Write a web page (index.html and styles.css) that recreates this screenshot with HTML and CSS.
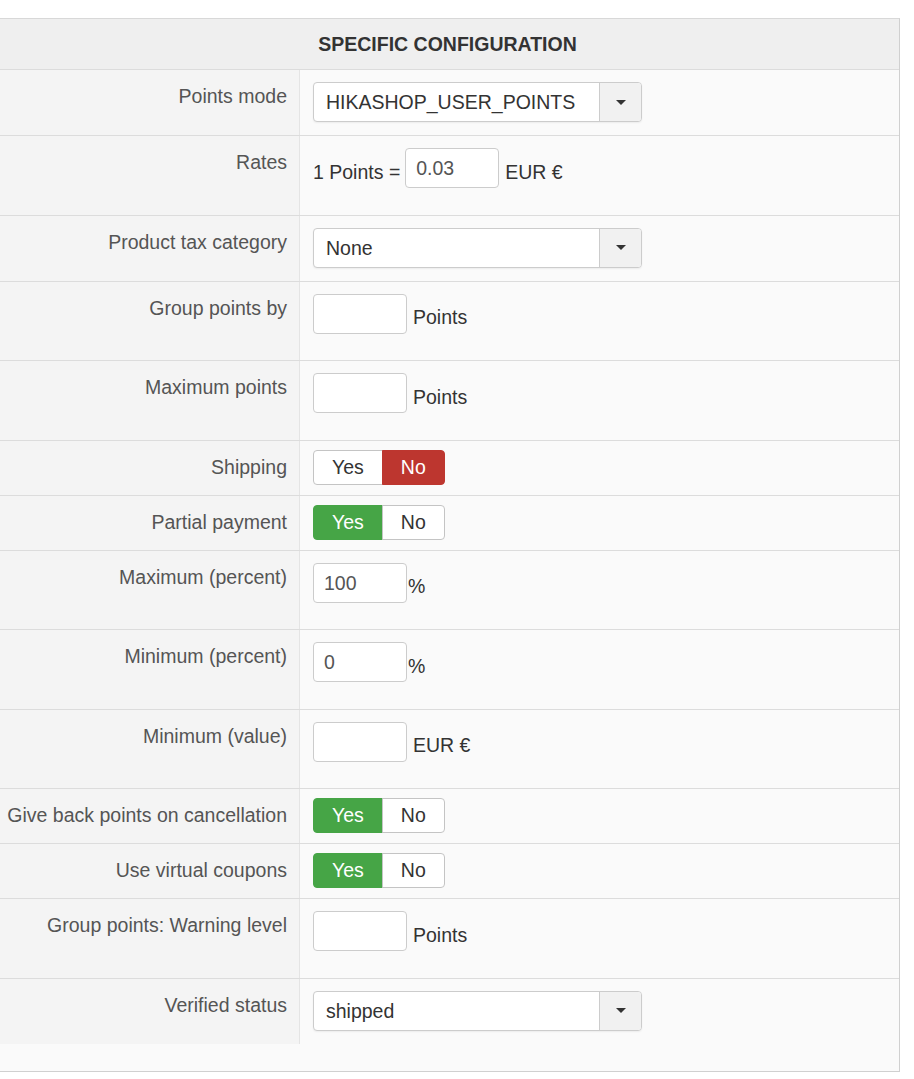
FILE: index.html
```html
<!DOCTYPE html>
<html lang="en">
<head>
    <meta charset="UTF-8">
    <meta name="viewport" content="width=device-width, initial-scale=1.0">
    <title>Specific configuration</title>
    <link rel="stylesheet" href="styles.css">
</head>
<body>
<div class="panel">
    <div class="panel-title">SPECIFIC CONFIGURATION</div>

    <div class="row">
        <div class="key">Points mode</div>
        <div class="value">
            <div class="select"><span class="select-text">HIKASHOP_USER_POINTS</span><span class="select-arrow"><b></b></span></div>
        </div>
    </div>

    <div class="row">
        <div class="key">Rates</div>
        <div class="value">
            <div class="field"><span class="unit">1 Points =</span><input type="text" value="0.03"><span class="unit">EUR €</span></div>
        </div>
    </div>

    <div class="row">
        <div class="key">Product tax category</div>
        <div class="value">
            <div class="select"><span class="select-text">None</span><span class="select-arrow"><b></b></span></div>
        </div>
    </div>

    <div class="row">
        <div class="key">Group points by</div>
        <div class="value">
            <div class="field"><input type="text" value=""><span class="unit">Points</span></div>
        </div>
    </div>

    <div class="row">
        <div class="key">Maximum points</div>
        <div class="value">
            <div class="field"><input type="text" value=""><span class="unit">Points</span></div>
        </div>
    </div>

    <div class="row">
        <div class="key">Shipping</div>
        <div class="value">
            <div class="toggle"><span class="btn">Yes</span><span class="btn btn-no active-no">No</span></div>
        </div>
    </div>

    <div class="row">
        <div class="key">Partial payment</div>
        <div class="value">
            <div class="toggle"><span class="btn active-yes">Yes</span><span class="btn btn-no">No</span></div>
        </div>
    </div>

    <div class="row">
        <div class="key">Maximum (percent)</div>
        <div class="value">
            <div class="field"><input type="text" value="100"><span class="unit tight">%</span></div>
        </div>
    </div>

    <div class="row">
        <div class="key">Minimum (percent)</div>
        <div class="value">
            <div class="field"><input type="text" value="0"><span class="unit tight">%</span></div>
        </div>
    </div>

    <div class="row">
        <div class="key">Minimum (value)</div>
        <div class="value">
            <div class="field"><input type="text" value=""><span class="unit">EUR €</span></div>
        </div>
    </div>

    <div class="row">
        <div class="key">Give back points on cancellation</div>
        <div class="value">
            <div class="toggle"><span class="btn active-yes">Yes</span><span class="btn btn-no">No</span></div>
        </div>
    </div>

    <div class="row">
        <div class="key">Use virtual coupons</div>
        <div class="value">
            <div class="toggle"><span class="btn active-yes">Yes</span><span class="btn btn-no">No</span></div>
        </div>
    </div>

    <div class="row">
        <div class="key">Group points: Warning level</div>
        <div class="value">
            <div class="field"><input type="text" value=""><span class="unit">Points</span></div>
        </div>
    </div>

    <div class="row">
        <div class="key">Verified status</div>
        <div class="value">
            <div class="select"><span class="select-text">shipped</span><span class="select-arrow"><b></b></span></div>
        </div>
    </div>
</div>
</body>
</html>
```

FILE: styles.css
```css
body {
    margin: 0;
    background-color: #fff;
    font-family: "Liberation Sans", Arial, sans-serif;
    font-size: 19.5px;
    color: #333;
}
.panel {
    width: 899px;
    margin-top: 18px;
    border-top: 1px solid #d8d8d8;
    border-right: 1px solid #d0d0d0;
    border-bottom: 1px solid #d0d0d0;
    background-color: #fafafa;
    padding-bottom: 27px;
}
.panel-title {
    height: 50px;
    line-height: 50px;
    text-align: center;
    font-weight: bold;
    color: #333;
    background-color: #efefef;
    padding-right: 4px;
}
.row {
    display: grid;
    grid-template-columns: 300px 1fr;
    border-top: 1px solid #dcdcdc;
}
.key {
    background-color: #f4f4f4;
    border-right: 1px solid #e4e4e4;
    text-align: right;
    color: #555;
    line-height: 27px;
    padding: 13px 12px 0 0;
}
.value {
    padding: 9px 13px 10px 13px;
}
.select {
    display: flex;
    width: 329px;
    height: 40px;
    box-sizing: border-box;
    margin: 3px 0;
    border: 1px solid #ccc;
    border-radius: 4px;
    background-color: #fff;
    box-shadow: 0 1px 2px rgba(0, 0, 0, 0.06);
    overflow: hidden;
}
.select-text {
    flex: 1;
    line-height: 38px;
    padding-left: 12px;
    color: #333;
}
.select-arrow {
    width: 41px;
    display: flex;
    align-items: center;
    justify-content: center;
    background-color: #f1f1f1;
    border-left: 1px solid #ccc;
}
.select-arrow b {
    width: 0;
    height: 0;
    border-left: 5px solid transparent;
    border-right: 5px solid transparent;
    border-top: 5px solid #333;
}
.field {
    display: flex;
    align-items: center;
    margin: 3px 0 16.5px;
}
.field input {
    width: 94px;
    height: 40px;
    box-sizing: border-box;
    margin: 0;
    padding: 1px 10px 0;
    border: 1px solid #ccc;
    border-radius: 4px;
    background-color: #fff;
    font-family: "Liberation Sans", Arial, sans-serif;
    font-size: 19.5px;
    color: #555;
}
.unit {
    padding-top: 8px;
    margin: 0 6px 0 6px;
    color: #333;
}
.field .unit:first-child {
    margin-left: 0;
    margin-right: 5px;
}
.unit.tight {
    margin-left: 1px;
}
.toggle {
    display: flex;
    height: 35px;
}
.btn {
    display: flex;
    align-items: center;
    padding: 0 18px;
    border: 1px solid #c4c4c4;
    background-color: #fff;
    color: #333;
    border-radius: 4px 0 0 4px;
}
.btn-no {
    margin-left: -1px;
    border-radius: 0 4px 4px 0;
}
.active-yes {
    background-color: #46a546;
    border-color: #46a546;
    color: #fff;
}
.active-no {
    background-color: #bd362f;
    border-color: #bd362f;
    color: #fff;
}
```
